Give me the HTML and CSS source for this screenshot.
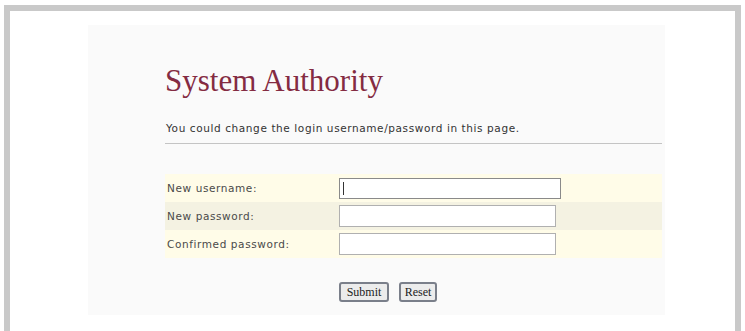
FILE: index.html
```html
<!DOCTYPE html>
<html>
<head>
<meta charset="utf-8">
<link rel="stylesheet" href="styles.css">
</head>
<body>
<div class="frame">
  <div class="panel">
    <h1 class="title">System Authority</h1>
    <p class="desc">You could change the login username/password in this page.</p>
    <div class="rule"></div>
    <div class="form">
      <div class="row row-a">
        <span class="label">New username:</span>
        <span class="field field-wide"><span class="caret"></span></span>
      </div>
      <div class="row row-b">
        <span class="label">New password:</span>
        <span class="field"></span>
      </div>
      <div class="row row-a row-last">
        <span class="label">Confirmed password:</span>
        <span class="field"></span>
      </div>
    </div>
    <div class="buttons">
      <span class="btn btn-submit">Submit</span>
      <span class="btn btn-reset">Reset</span>
    </div>
  </div>
</div>
</body>
</html>
```
FILE: styles.css
```css
html, body {
  margin: 0;
  padding: 0;
  background: #ffffff;
}
.frame {
  margin: 5px 4px 0 4px;
  width: 725px;
  height: 310px;
  border: 6px solid #c9c9c9;
  background: #ffffff;
  padding-top: 14px;
  box-sizing: content-box;
}
.panel {
  margin-left: 78px;
  width: 577px;
  height: 290px;
  background: #fafafa;
  padding-left: 77px;
  box-sizing: border-box;
  padding-top: 39px;
}
.title {
  margin: 0;
  font-family: "Liberation Serif", "Times New Roman", serif;
  font-weight: normal;
  font-size: 31px;
  line-height: 34px;
  color: #842b42;
}
.desc {
  margin: 23px 0 0 1px;
  font-family: "DejaVu Sans", Verdana, sans-serif;
  font-size: 10.5px;
  letter-spacing: 0.6px;
  line-height: 14px;
  color: #333333;
}
.rule {
  margin-top: 8px;
  width: 497px;
  border-top: 1px solid #c4c4c4;
}
.form {
  margin-top: 30px;
  width: 497px;
}
.row {
  display: flex;
  align-items: center;
  height: 28px;
}
.row-a {
  background: #fffce8;
}
.row-b {
  background: #f4f2e2;
}
.label {
  width: 172px;
  padding-left: 2px;
  font-family: "DejaVu Sans", Verdana, sans-serif;
  font-size: 10.5px;
  letter-spacing: 0.6px;
  color: #4a4a4a;
  white-space: nowrap;
}
.field {
  display: block;
  width: 217px;
  height: 22px;
  box-sizing: border-box;
  border: 1px solid #b0b0b0;
  background: #ffffff;
  position: relative;
}
.field-wide {
  width: 222px;
  height: 21px;
  border-color: #8a8a8a;
}
.caret {
  position: absolute;
  left: 3px;
  top: 3px;
  width: 1px;
  height: 13px;
  background: #333333;
}
.buttons {
  display: flex;
  gap: 10px;
  margin-top: 24px;
  margin-left: 174px;
}
.btn {
  display: flex;
  align-items: center;
  justify-content: center;
  height: 20px;
  box-sizing: border-box;
  border: 2px solid #7a7f8a;
  border-radius: 3px;
  background: #ececec;
  font-family: "Liberation Serif", "Times New Roman", serif;
  font-size: 12px;
  color: #222222;
}
.btn-submit {
  width: 50px;
}
.btn-reset {
  width: 38px;
}
```
